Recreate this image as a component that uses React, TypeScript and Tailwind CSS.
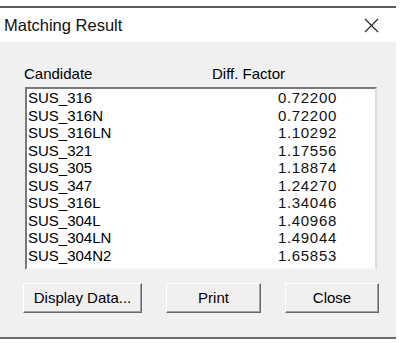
import React from "react";

type Row = {
  name: string;
  factor: string;
};

const rows: Row[] = [
  { name: "SUS_316", factor: "0.72200" },
  { name: "SUS_316N", factor: "0.72200" },
  { name: "SUS_316LN", factor: "1.10292" },
  { name: "SUS_321", factor: "1.17556" },
  { name: "SUS_305", factor: "1.18874" },
  { name: "SUS_347", factor: "1.24270" },
  { name: "SUS_316L", factor: "1.34046" },
  { name: "SUS_304L", factor: "1.40968" },
  { name: "SUS_304LN", factor: "1.49044" },
  { name: "SUS_304N2", factor: "1.65853" },
];

function WinButton({ text, width }: { text: string; width: string }) {
  return (
    <button
      className={`${width} shrink-0 h-[30px] bg-[#f0f0f0] border border-t-white border-l-white border-b-[#696969] border-r-[#696969] shadow-[inset_-1px_-1px_#a0a0a0] text-[15px] text-black`}
    >
      {text}
    </button>
  );
}

function App() {
  return (
    <div className="w-[400px] h-[343px] bg-white overflow-hidden font-['Liberation_Sans',Arial,sans-serif]">
      <div className="w-[396px] pt-[6px]">
        <div className="h-[2px] bg-[#5c5c5c]" />
        {/* title bar */}
        <div className="h-[34px] flex items-center justify-between pl-[4px] pr-[17px] bg-white">
          <span className="text-[16.5px] text-[#111]">Matching Result</span>
          <svg width="15" height="15" viewBox="0 0 15 15" className="mt-[1px]">
            <path d="M1 1 L14 14 M14 1 L1 14" stroke="#222" strokeWidth="1.1" fill="none" />
          </svg>
        </div>
        {/* body */}
        <div className="h-[295px] bg-[#f0f0f0] pt-[23px] px-[24px] flex flex-col">
          <div className="flex text-[15px] leading-[17px] text-black">
            <span className="w-[188px]">Candidate</span>
            <span>Diff. Factor</span>
          </div>
          <div className="shrink-0 ml-px mt-[5px] w-[352px] h-[183px] bg-white border-2 border-t-[#7a7a7a] border-l-[#7a7a7a] border-b-[#f4f4f4] border-r-[#dcdcdc]">
            {rows.map((r) => (
              <div key={r.name} className="flex justify-between h-[17.5px] leading-[17.5px] text-[15px] text-black">
                <span className="pl-px">{r.name}</span>
                <span className="pr-[38px] tracking-[0.7px] text-[#111]">{r.factor}</span>
              </div>
            ))}
          </div>
          <div className="mt-[13px] flex gap-[24px] -ml-px">
            <WinButton text="Display Data..." width="w-[119px]" />
            <WinButton text="Print" width="w-[95px]" />
            <WinButton text="Close" width="w-[94px]" />
          </div>
        </div>
        <div className="h-[2px] bg-[#6b6b6b]" />
      </div>
    </div>
  );
}

export default App;
